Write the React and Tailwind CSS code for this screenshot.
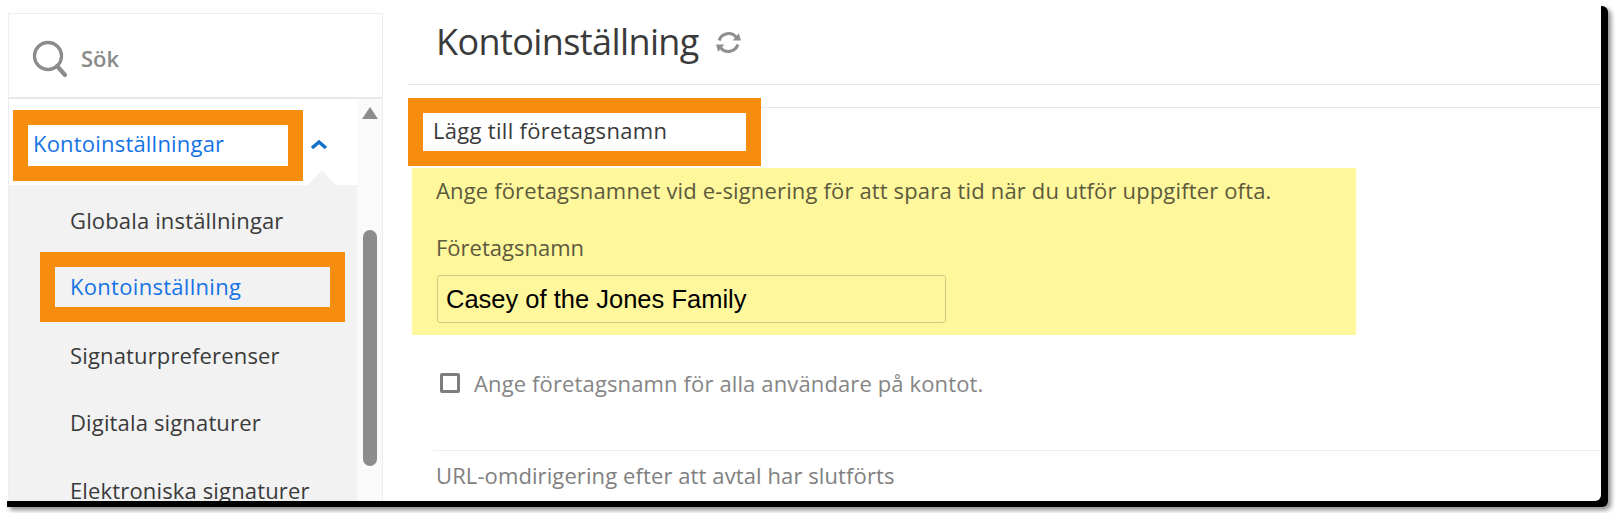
const font = { fontFamily: '"Open Sans", sans-serif' };

function SideItem({ children, h = 'h-[68px]', pad = 'pb-[2px]' }) {
  return <div className={`${h} ${pad} flex items-center pl-[61px] text-[22px] tracking-[0.15px] text-[#3a3a3a] whitespace-nowrap`}>{children}</div>;
}

export default function App() {
  return (
    <div className="w-[1616px] h-[513px] bg-white overflow-hidden" style={font}>
      <div className="w-[1601px] h-[501px] bg-white rounded-br-[6px] rounded-tr-[6px] overflow-hidden flex shadow-[7px_6px_0_#000,10px_9px_5px_#8a8a8a]">
        <aside className="ml-[8px] mt-[13px] w-[375px] h-[488px] shrink-0 border-x border-t border-[#eeeeee] flex flex-col">
          <div className="h-[85px] shrink-0 border-b-2 border-[#e8e8e8] flex items-center pl-[23px] pt-[6px] gap-[13px]">
            <svg width="36" height="38" viewBox="0 0 36 38" fill="none" stroke="#8c8c8c">
              <circle cx="16" cy="16" r="13.5" strokeWidth="3.4" />
              <path d="M25 26 L33 35" strokeWidth="4.2" strokeLinecap="round" />
            </svg>
            <span className="text-[22px] text-[#8a8a8a] font-semibold">Sök</span>
          </div>
          <div className="flex-1 flex min-h-0">
            <div className="w-[348px] shrink-0 flex flex-col min-h-0 overflow-hidden">
              <div className="h-[86px] shrink-0 relative pt-[11px] pl-[4px] flex items-start">
                <div className="w-[290px] h-[71px] border-[15px] border-[#f78d0f] bg-white flex items-center pl-[5px] pb-[4px] text-[22px] tracking-[0.2px] text-[#1473e6] whitespace-nowrap">
                  Kontoinställningar
                </div>
                <svg className="ml-[7px] mt-[29px]" width="18" height="11" viewBox="0 0 18 11" fill="none" stroke="#1473c6" strokeWidth="3.6">
                  <path d="M2 9 L9 3 L16 9" />
                </svg>
                <div className="absolute left-[299px] bottom-0 w-0 h-0 border-x-[14px] border-x-transparent border-b-[15px] border-b-[#f2f2f2]" />
              </div>
              <div className="flex-1 bg-[#f2f2f2] min-h-0">
                <SideItem h="h-[67px]" pad="pt-[4px]">Globala inställningar</SideItem>
                <div className="ml-[31px] w-[305px] h-[70px] border-[15px] border-[#f78d0f] flex items-center pl-[15px] pb-[2px] text-[22px] tracking-[0.3px] text-[#1473e6] whitespace-nowrap">
                  Kontoinställning
                </div>
                <SideItem>Signaturpreferenser</SideItem>
                <SideItem pad="pb-[3px]" h="h-[67px]">Digitala signaturer</SideItem>
                <SideItem pad="pb-[2px]">Elektroniska signaturer</SideItem>
              </div>
            </div>
            <div className="flex-1 bg-[#fafafa] flex flex-col items-center">
              <div className="mt-[8px] w-0 h-0 border-x-[8px] border-x-transparent border-b-[12px] border-b-[#8c8c8c]" />
              <div className="mt-[111px] w-[14px] h-[236px] rounded-full bg-[#8c8c8c]" />
            </div>
          </div>
        </aside>
        <main className="ml-[25px] flex-1 min-w-0">
          <div className="h-[85px] border-b border-[#e8e8e8] flex items-center pl-[28px] pb-[1px]">
            <h1 className="text-[36px] font-normal tracking-[-0.6px] text-[#3a3a3a] leading-none">Kontoinställning</h1>
            <svg className="ml-[16px] mt-[1px]" width="27" height="25" viewBox="0 0 26 24" fill="none" stroke="#8f8f8f" strokeWidth="3">
              <path d="M4 10 A9.5 9.5 0 0 1 20.5 7" />
              <path d="M22 14 A9.5 9.5 0 0 1 5.5 17" />
              <path d="M17 10 L25 10 L23 3 Z" fill="#8f8f8f" stroke="none" />
              <path d="M9 14 L1 14 L3 21 Z" fill="#8f8f8f" stroke="none" />
            </svg>
          </div>
          <div className="h-[23px] border-b border-[#e8e8e8]" />
          <div className="relative -mt-[10px] w-[353px] h-[68px] border-[15px] border-[#f78d0f] bg-white flex items-center pl-[10px] pb-[4px] text-[22px] tracking-[0.3px] text-[#3a3a3a] whitespace-nowrap">
            Lägg till företagsnamn
          </div>
          <div className="mt-[2px] ml-[4px] w-[944px] h-[167px] bg-[#fff79c] pl-[24px] pt-[8px] text-[#5c5a3c]">
            <p className="text-[22px] leading-[28px] tracking-[0.15px] whitespace-nowrap">Ange företagsnamnet vid e-signering för att spara tid när du utför uppgifter ofta.</p>
            <label className="block mt-[29px] text-[22px] leading-[28px]">Företagsnamn</label>
            <div className="mt-[14px] ml-[1px] w-[509px] h-[48px] border border-[#cfcb85] rounded-[3px] flex items-center pl-[8px] text-[25.5px] text-black" style={{ fontFamily: '"Liberation Sans", sans-serif' }}>
              Casey of the Jones Family
            </div>
          </div>
          <div className="mt-[38px] ml-[32px] flex items-center h-[20px]">
            <span className="w-[20px] h-[20px] border-[3.5px] border-[#7d7d7d] rounded-[2px] bg-white shrink-0" />
            <span className="ml-[14px] text-[22px] tracking-[0.13px] text-[#858585] whitespace-nowrap">Ange företagsnamn för alla användare på kontot.</span>
          </div>
          <div className="mt-[57px] ml-[25px] border-t border-[#eeeeee] pl-[3px] pt-[10px] text-[22px] leading-[28px] tracking-[0.1px] text-[#808080] whitespace-nowrap">
            URL-omdirigering efter att avtal har slutförts
          </div>
        </main>
      </div>
    </div>
  );
}
